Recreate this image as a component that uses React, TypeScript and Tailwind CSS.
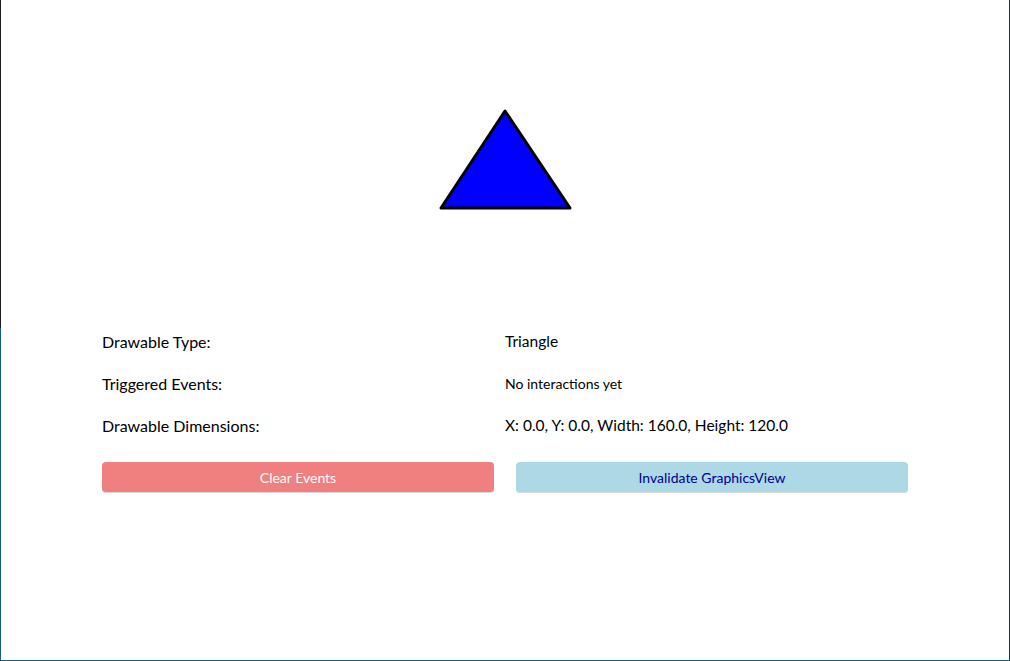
export default function App() {
  const rows = [
    { label: "Drawable Type:", value: "Triangle", small: false },
    { label: "Triggered Events:", value: "No interactions yet", small: true },
    { label: "Drawable Dimensions:", value: "X: 0.0, Y: 0.0, Width: 160.0, Height: 120.0", small: false },
  ];

  return (
    <div
      className="relative w-[1010px] h-[661px] bg-white overflow-hidden text-black"
      style={{ fontFamily: 'Lato, "Noto Sans", sans-serif' }}
    >
      {/* window edges */}
      <div className="absolute left-0 top-0 w-px h-[328px] bg-[#1c1c22]" />
      <div className="absolute left-0 top-[328px] bottom-0 w-px bg-[#1b5e78]" />
      <div className="absolute right-0 top-0 bottom-0 w-px bg-[#1c2c4c]" />
      <div className="absolute left-0 right-0 bottom-0 h-px bg-[#1b5e78]" />

      <div className="flex flex-col items-center">
        <svg className="mt-[108px] ml-[1px]" width="135" height="103" viewBox="0 0 135 103">
          <polygon
            points="67,3 3,100 132,100"
            fill="#0000ff"
            stroke="#000"
            strokeWidth="3"
            strokeLinejoin="round"
          />
        </svg>
      </div>

      <div className="mt-[110px] mx-[102px] w-[806px]">
        <div className="grid grid-cols-2">
          {rows.map((r) => (
            <div key={r.label} className="contents">
              <div className="h-[42px] flex items-center text-[16px]">{r.label}</div>
              <div
                className={`h-[42px] flex ${
                  r.small ? "items-start pt-[10px] text-[14px]" : "items-center text-[15.5px]"
                }`}
              >
                {r.value}
              </div>
            </div>
          ))}
        </div>

        <div className="mt-[15px] flex gap-[22px]">
          <button className="flex-1 h-[31px] rounded-[4px] bg-[#f08080] text-white text-[14px] border-b border-[#d8d8d8]">
            Clear Events
          </button>
          <button className="flex-1 h-[31px] rounded-[4px] bg-[#add8e6] text-[#00008b] text-[14px] border-b border-[#d8d8d8]">
            Invalidate GraphicsView
          </button>
        </div>
      </div>
    </div>
  );
}
